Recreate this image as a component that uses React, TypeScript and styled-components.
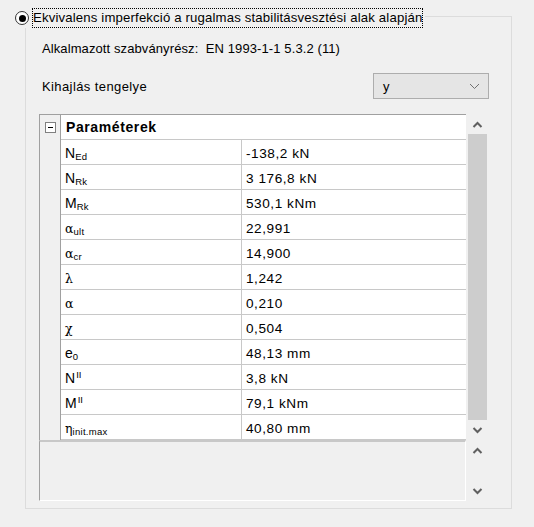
import React from "react";
import styled, { createGlobalStyle } from "styled-components";

const Global = createGlobalStyle`
  html, body { margin: 0; padding: 0; background: #f0f0f0; }
  body { font-family: "Liberation Sans", Arial, sans-serif; font-size: 12px; color: #000; }
`;

const Page = styled.div`
  width: 534px;
  height: 527px;
  box-sizing: border-box;
  padding: 16px 22px 18px 25px;
`;

const Group = styled.div`
  position: relative;
  height: 100%;
  box-sizing: border-box;
  border: 1px solid #dcdcdc;
  padding: 17px 22px 0 13px;
  display: flex;
  flex-direction: column;
`;

const Legend = styled.div`
  position: absolute;
  left: -11px;
  top: -9px;
  display: flex;
  align-items: center;
  gap: 3px;
  background: #f0f0f0;
  padding-right: 2px;
`;

const Radio = styled.span`
  width: 12px;
  height: 12px;
  border: 1px solid #333;
  border-radius: 50%;
  background: #fff;
  display: flex;
  align-items: center;
  justify-content: center;
  &::after {
    content: "";
    width: 7px;
    height: 7px;
    border-radius: 50%;
    background: #000;
  }
`;

const LegendText = styled.span`
  border: 1px dotted #000;
  padding: 1px 0 2px 0;
  line-height: 15px;
  font-size: 13.2px;
  letter-spacing: 0.15px;
`;

const InfoRow = styled.div`
  padding-left: 3px;
  height: 28px;
  display: flex;
  align-items: center;
  font-size: 13px;
  letter-spacing: 0.1px;
`;

const AxisRow = styled.div`
  display: flex;
  align-items: center;
  justify-content: space-between;
  margin-top: 11px;
  padding-left: 3px;
  font-size: 13px;
  letter-spacing: 0.4px;
`;

const Select = styled.div`
  width: 116px;
  height: 26px;
  box-sizing: border-box;
  border: 1px solid #adadad;
  background: #e5e5e5;
  display: flex;
  align-items: center;
  justify-content: space-between;
  padding: 0 8px 0 9px;
  font-size: 13px;
`;

const Grid = styled.div`
  margin-top: 15px;
  width: 448px;
  display: flex;
  flex-direction: column;
`;

const GridMain = styled.div`
  display: flex;
  height: 326px;
`;

const Table = styled.div`
  flex: 1;
  border-top: 1px solid #a0a0a0;
  border-left: 1px solid #a0a0a0;
  background: #fff;
  overflow: hidden;
  display: flex;
  flex-direction: column;
`;

const Row = styled.div`
  display: flex;
  height: 25px;
  flex-shrink: 0;
`;

const Gutter = styled.div`
  width: 20px;
  background: #f0f0f0;
  border-right: 1px solid #a0a0a0;
  display: flex;
  align-items: center;
  justify-content: center;
  flex-shrink: 0;
`;

const Minus = styled.span`
  width: 9px;
  height: 9px;
  border: 1px solid #808080;
  background: #fff;
  display: flex;
  align-items: center;
  justify-content: center;
  &::after {
    content: "";
    width: 5px;
    height: 1px;
    background: #000;
  }
`;

const Category = styled.div`
  flex: 1;
  border-bottom: 1px solid #c8c8c8;
  display: flex;
  align-items: center;
  padding-left: 5px;
  font-weight: bold;
  font-size: 14px;
  letter-spacing: 0.6px;
  color: #000;
`;

const NameCell = styled.div`
  width: 181px;
  flex-shrink: 0;
  border-bottom: 1px solid #c8c8c8;
  border-right: 1px solid #c8c8c8;
  display: flex;
  align-items: center;
  padding-left: 4px;
  padding-top: 2px;
  box-sizing: border-box;
  font-size: 14px;
`;

const ValueCell = styled.div`
  flex: 1;
  border-bottom: 1px solid #c8c8c8;
  display: flex;
  align-items: center;
  padding-left: 4px;
  padding-top: 2px;
  font-size: 13.6px;
  letter-spacing: 0.55px;
`;

const Greek = styled.span`
  font-family: "DejaVu Serif", "Liberation Serif", serif;
  font-size: 12.5px;
`;

const Sub = styled.span`
  font-size: 9.5px;
  position: relative;
  top: 3px;
  letter-spacing: 0.3px;
`;

const Sup = styled.span`
  font-size: 9.5px;
  position: relative;
  top: -4px;
  margin-left: 1px;
`;

const ScrollBar = styled.div`
  width: 19px;
  margin-left: 2px;
  display: flex;
  flex-direction: column;
  align-items: stretch;
`;

const Arrow = styled.div`
  height: 20px;
  display: flex;
  align-items: center;
  justify-content: center;
`;

const Thumb = styled.div`
  flex: 1;
  background: #cdcdcd;
`;

const Spacer = styled.div`
  flex: 1;
`;

const DescRow = styled.div`
  display: flex;
  height: 61px;
`;

const Desc = styled.div`
  flex: 1;
  border-top: 2px solid #c8c8c8;
  border-left: 1px solid #a0a0a0;
  border-bottom: 1px solid #fff;
  border-right: 1px solid #fff;
  background: #f0f0f0;
`;

const Chevron = ({ up }: { up?: boolean }) => (
  <svg width="11" height="7" viewBox="0 0 11 7">
    <path
      d={up ? "M1.5 6 L5.5 2 L9.5 6" : "M1.5 1 L5.5 5 L9.5 1"}
      fill="none"
      stroke="#606060"
      strokeWidth="2"
    />
  </svg>
);

const SelectChevron = () => (
  <svg width="11" height="7" viewBox="0 0 11 7">
    <path d="M1 1 L5.5 5.5 L10 1" fill="none" stroke="#707070" strokeWidth="1" />
  </svg>
);

type Param = { name: React.ReactNode; value: string };

const params: Param[] = [
  { name: <>N<Sub>Ed</Sub></>, value: "-138,2 kN" },
  { name: <>N<Sub>Rk</Sub></>, value: "3 176,8 kN" },
  { name: <>M<Sub>Rk</Sub></>, value: "530,1 kNm" },
  { name: <><Greek>α</Greek><Sub>ult</Sub></>, value: "22,991" },
  { name: <><Greek>α</Greek><Sub>cr</Sub></>, value: "14,900" },
  { name: <Greek>λ</Greek>, value: "1,242" },
  { name: <Greek>α</Greek>, value: "0,210" },
  { name: <Greek>χ</Greek>, value: "0,504" },
  { name: <>e<Sub>0</Sub></>, value: "48,13 mm" },
  { name: <>N<Sup>II</Sup></>, value: "3,8 kN" },
  { name: <>M<Sup>II</Sup></>, value: "79,1 kNm" },
  { name: <><Greek>η</Greek><Sub>init.max</Sub></>, value: "40,80 mm" },
];

export default function App() {
  return (
    <>
      <Global />
      <Page>
        <Group>
          <Legend>
            <Radio />
            <LegendText>Ekvivalens imperfekció a rugalmas stabilitásvesztési alak alapján</LegendText>
          </Legend>
          <InfoRow>Alkalmazott szabványrész:&nbsp; EN 1993-1-1 5.3.2 (11)</InfoRow>
          <AxisRow>
            <span>Kihajlás tengelye</span>
            <Select>
              <span>y</span>
              <SelectChevron />
            </Select>
          </AxisRow>
          <Grid>
            <GridMain>
              <Table>
                <Row>
                  <Gutter>
                    <Minus />
                  </Gutter>
                  <Category>Paraméterek</Category>
                </Row>
                {params.map((p, i) => (
                  <Row key={i}>
                    <Gutter />
                    <NameCell>{p.name}</NameCell>
                    <ValueCell>{p.value}</ValueCell>
                  </Row>
                ))}
              </Table>
              <ScrollBar>
                <Arrow><Chevron up /></Arrow>
                <Thumb />
                <Arrow><Chevron /></Arrow>
              </ScrollBar>
            </GridMain>
            <DescRow>
              <Desc />
              <ScrollBar>
                <Arrow><Chevron up /></Arrow>
                <Spacer />
                <Arrow><Chevron /></Arrow>
              </ScrollBar>
            </DescRow>
          </Grid>
        </Group>
      </Page>
    </>
  );
}
